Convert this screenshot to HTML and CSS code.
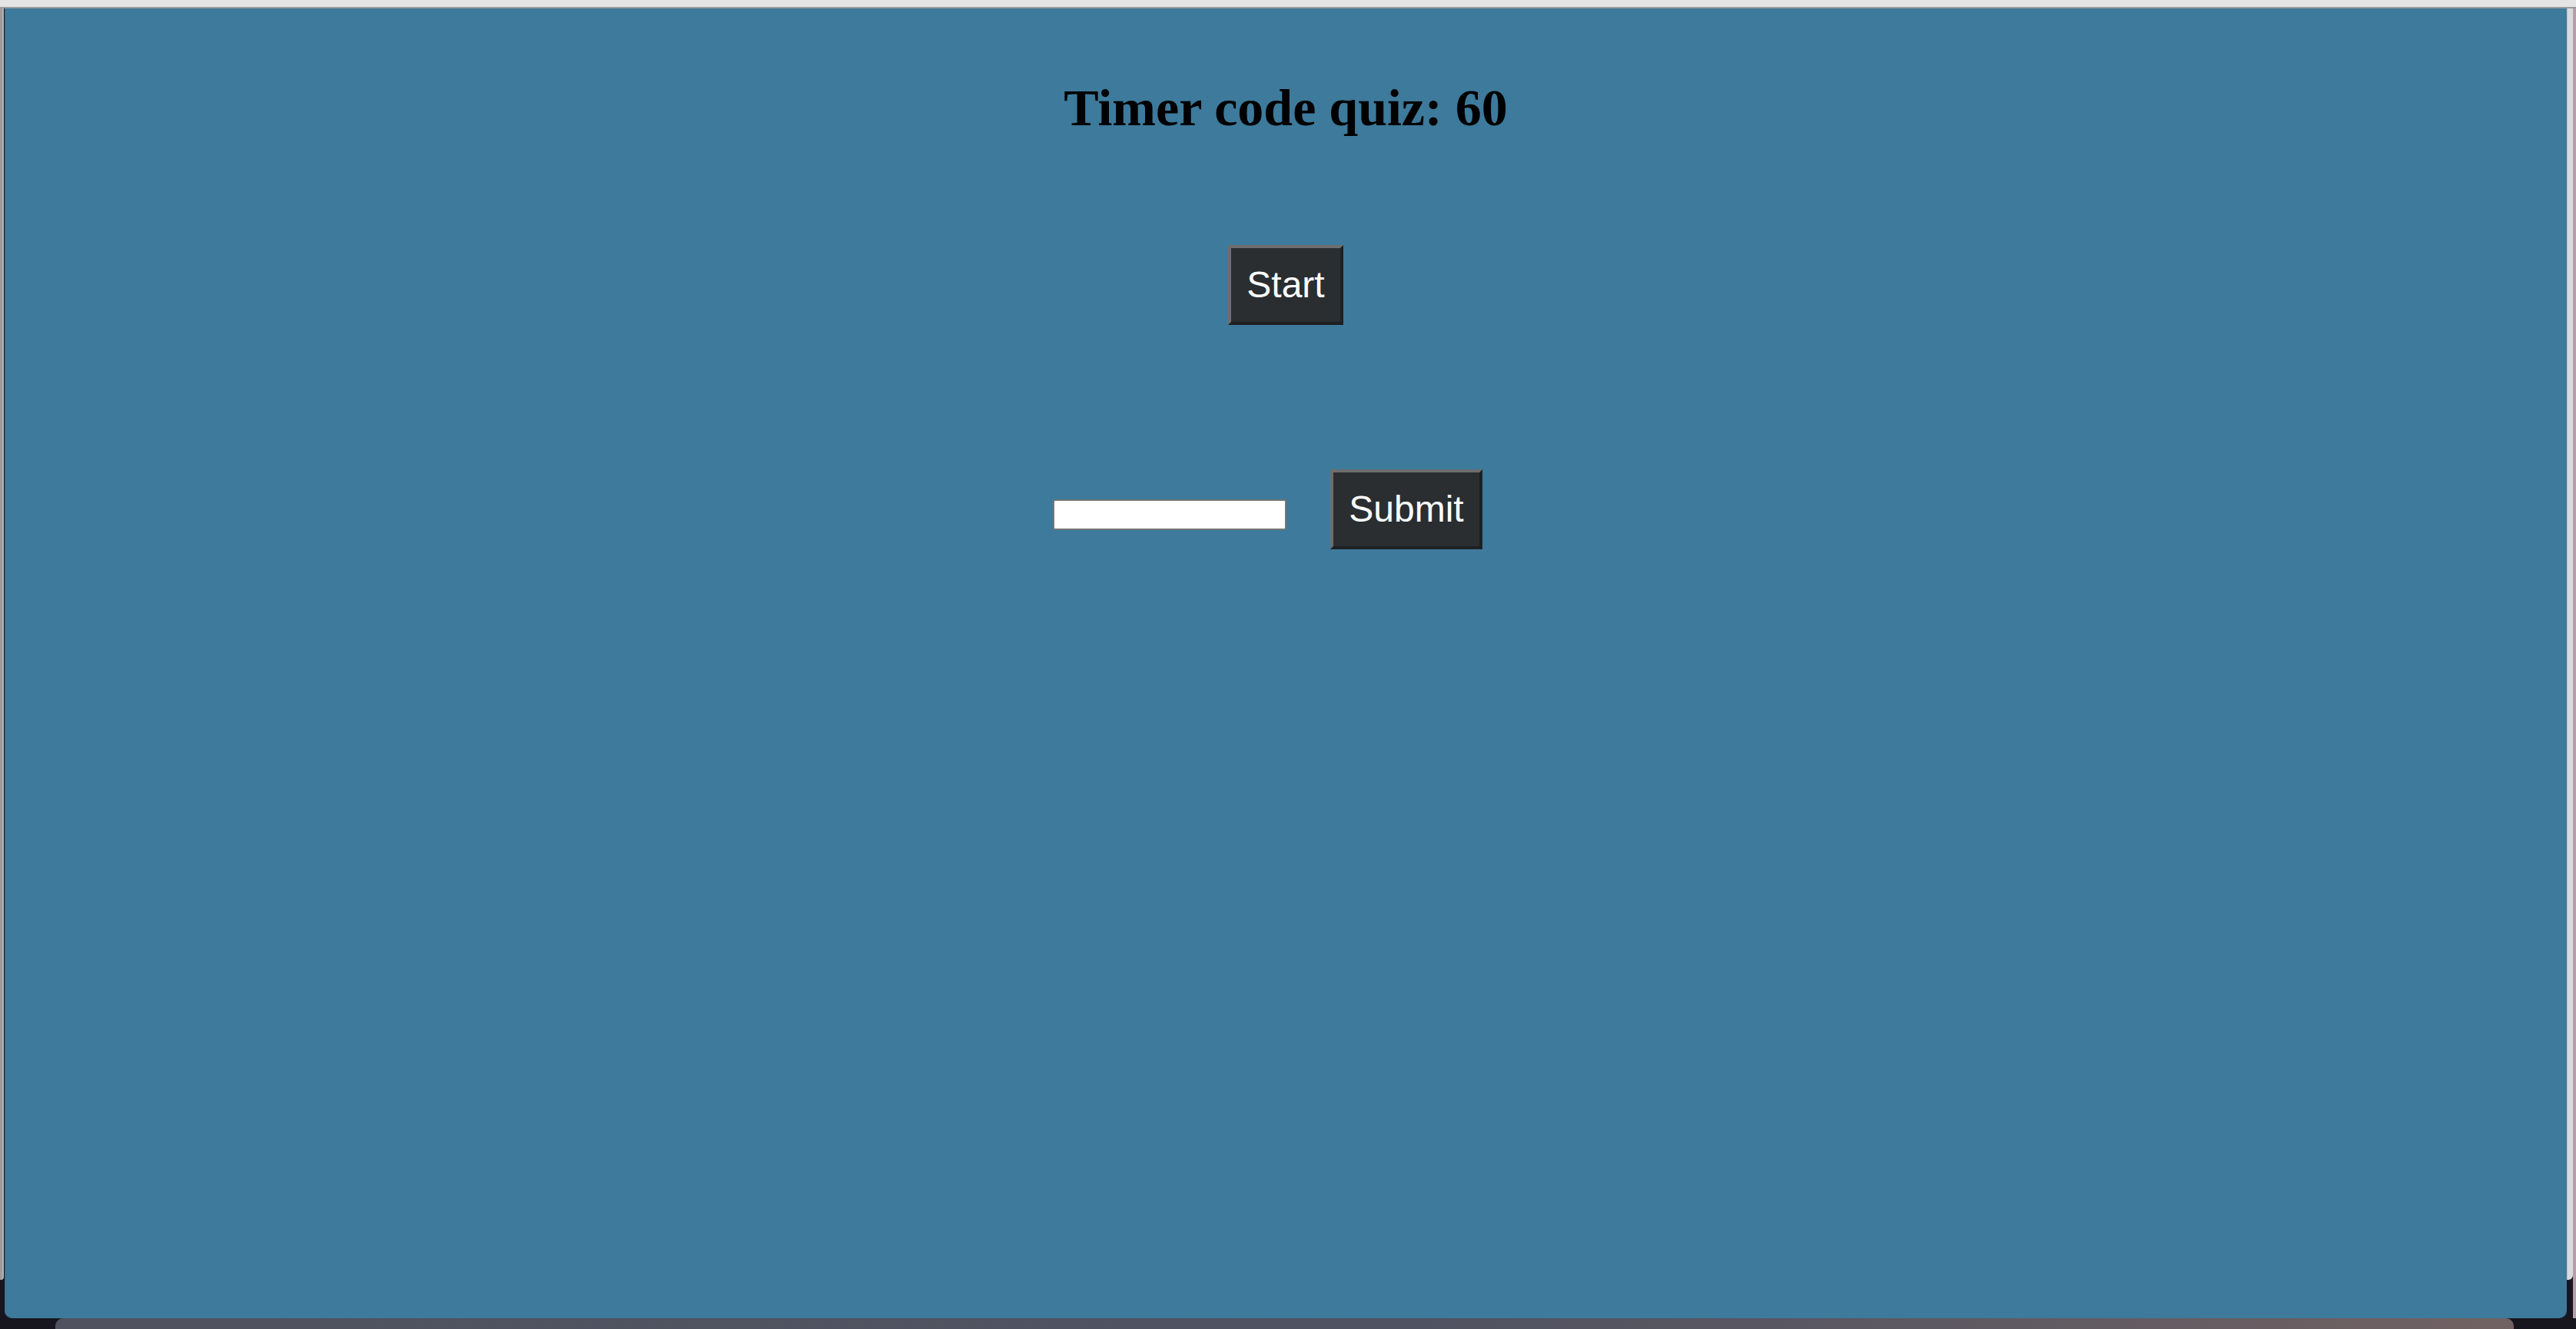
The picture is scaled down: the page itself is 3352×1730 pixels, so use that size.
FILE: index.html
```html
<!DOCTYPE html>
<html lang="en">
<head>
<meta charset="utf-8">
<title>Timer code quiz</title>
<link rel="stylesheet" href="styles.css">
</head>
<body>
<div class="screen">
  <div class="topbar"></div>
  <div class="middle">
    <div class="edge-left"></div>
    <main class="window">
      <h1 class="title">Timer code quiz: 60</h1>
      <div class="start-row"><button class="btn" type="button">Start</button></div>
      <div class="submit-row">
        <input class="name-input" type="text">
        <button class="btn btn-submit" type="button">Submit</button>
      </div>
    </main>
    <div class="edge-right"><div class="edge-right-gray"></div><div class="edge-right-pink"></div></div>
  </div>
  <div class="bottom"><div class="dock"></div></div>
</div>
</body>
</html>
```
FILE: styles.css
```css
html, body {
  margin: 0;
  padding: 0;
}
body {
  width: 3352px;
  height: 1730px;
  overflow: hidden;
  background: #17161f;
  font-family: "Liberation Serif", "Times New Roman", serif;
}
.screen {
  display: flex;
  flex-direction: column;
  width: 3352px;
  height: 1730px;
}
.topbar {
  height: 9px;
  background: #e4e4e4;
  border-bottom: 2px solid #9b9b9b;
  flex: none;
}
.middle {
  display: flex;
  height: 1705px;
  flex: none;
  background: #17161f;
}
.edge-left {
  width: 3px;
  height: 1655px;
  flex: none;
  background: #9d9d9d;
  border-right: 2px solid #b4b4b4;
  box-shadow: inset 0 0 0 0 transparent;
  border-radius: 0 0 4px 0;
  margin-right: 1px;
  outline: none;
}
.window {
  flex: none;
  width: 3334px;
  height: 1705px;
  background: #3d7a9b;
  border-radius: 0 0 10px 10px;
  display: flex;
  flex-direction: column;
  align-items: center;
  box-shadow: inset 1px 0 0 #3a6f8c;
}
.edge-right {
  display: flex;
  flex: none;
  width: 12px;
}
.edge-right-gray {
  width: 8px;
  height: 1655px;
  background: #dadada;
  border-left: 1px solid #c4c4c4;
  box-sizing: border-box;
  border-radius: 0 0 6px 0;
}
.edge-right-pink {
  width: 4px;
  height: 1705px;
  background: #b59ea8;
}
.title {
  margin: 91px 0 0;
  font-family: "Liberation Serif", "Times New Roman", serif;
  font-size: 68px;
  line-height: 76px;
  font-weight: bold;
  color: #000;
  text-align: center;
}
.start-row {
  margin-top: 141px;
  display: flex;
  justify-content: center;
}
.btn {
  font-family: "Liberation Sans", Arial, sans-serif;
  font-size: 48px;
  line-height: 56px;
  padding: 20px;
  margin: 0;
  color: #ffffff;
  background: #2a2e31;
  border-width: 4px;
  border-style: solid;
  border-color: #6d6d6d #1e2022 #1e2022 #6d6d6d;
  border-radius: 0;
}
.submit-row {
  margin-top: 188px;
  display: flex;
  justify-content: center;
  align-items: flex-start;
  gap: 57px;
  padding-right: 47px;
}
.name-input {
  box-sizing: border-box;
  width: 304px;
  height: 40px;
  margin: 39px 0 0;
  padding: 2px 4px;
  font-family: "Liberation Sans", Arial, sans-serif;
  font-size: 26px;
  background: #ffffff;
  border: 2px solid #767676;
  border-radius: 3px;
}
.bottom {
  height: 14px;
  flex: none;
  display: flex;
  padding-left: 72px;
}
.dock {
  width: 3199px;
  height: 14px;
  border-radius: 10px 10px 0 0;
  background: linear-gradient(90deg, #50535f 0%, #4f5260 55%, #5f5a62 80%, #716262 100%);
}
```
